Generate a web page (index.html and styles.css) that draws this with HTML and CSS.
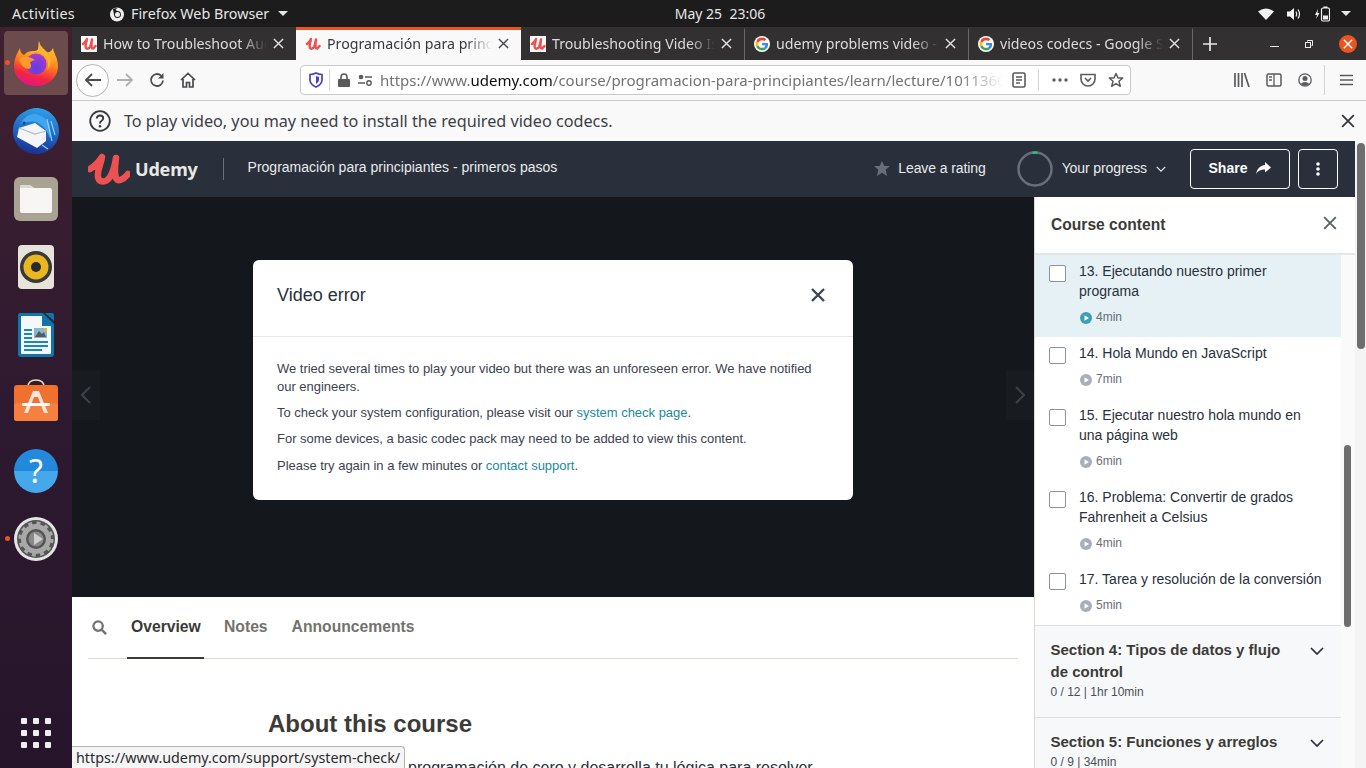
FILE: index.html
```html
<!DOCTYPE HTML>
<html>
    <head>
        <meta charset='utf-8'/>
        <title>Programación para principiantes</title>
        <link rel="stylesheet" href="styles.css">
    </head>
    <body>
        <svg class="defs" width="0" height="0">
            <symbol id="fav-u" viewBox="0 0 16 16">
                <path d="M2 8C4 6.500 5 5 6 3C5.500 6 4 9 4.800 11.500C5.500 13.500 8 13 9.200 10.500C10 8.500 10.500 6 11 3.500C10.500 7 10 10 11 12C11.800 13 13 12 14.500 10" fill="none" stroke="#ec5252" stroke-width="2.400" stroke-linecap="round" stroke-linejoin="round"/>
            </symbol>
            <symbol id="fav-g" viewBox="-6 -6 60 60">
                <circle cx="24" cy="24" r="30" fill="#fff"/>
                <path fill="#EA4335" d="M24 9.500c3.540 0 6.710 1.220 9.210 3.600l6.850-6.850C35.900 2.380 30.470 0 24 0 14.620 0 6.510 5.380 2.560 13.220l7.980 6.190C12.430 13.720 17.740 9.500 24 9.500z"/>
                <path fill="#4285F4" d="M46.980 24.550c0-1.570-.15-3.090-.38-4.550H24v9.020h12.940c-.58 2.960-2.260 5.480-4.780 7.180l7.730 6c4.510-4.180 7.090-10.360 7.090-17.650z"/>
                <path fill="#FBBC05" d="M10.530 28.590c-.48-1.450-.76-2.990-.76-4.590s.27-3.140.76-4.590l-7.980-6.190C.92 16.460 0 20.120 0 24c0 3.880.92 7.540 2.560 10.780l7.970-6.190z"/>
                <path fill="#34A853" d="M24 48c6.480 0 11.930-2.130 15.890-5.810l-7.730-6c-2.150 1.450-4.920 2.300-8.160 2.300-6.260 0-11.570-4.220-13.470-9.910l-7.980 6.190C6.510 42.620 14.620 48 24 48z"/>
            </symbol>
            <symbol id="x" viewBox="0 0 12 12">
                <path d="M1 1L11 11M11 1L1 11" fill="none" stroke="currentColor" stroke-width="1.600"/>
            </symbol>
            <symbol id="play" viewBox="0 0 12 12">
                <circle cx="6" cy="6" r="6" fill="currentColor"/>
                <path d="M4.500 3.200L9 6L4.500 8.800Z" fill="#fff"/>
            </symbol>
            <symbol id="chev" viewBox="0 0 14 8">
                <path d="M1 1L7 7L13 1" fill="none" stroke="currentColor" stroke-width="1.700"/>
            </symbol>
        </svg>

        <div id="panel">
            <div class="panel-left">
                <span class="activities">Activities</span>
                <span class="app-menu">
                    <svg width="16" height="16" viewBox="0 0 16 16"><circle cx="8" cy="8.500" r="7" fill="#eee"/><path d="M5 9a3.500 3.500 0 1 0 3-4L6.500 3.500L9 1.500L4 3Z" fill="#1d1d1d"/><circle cx="8.500" cy="8.500" r="2.500" fill="#eee"/></svg>
                    Firefox Web Browser
                    <i class="caret"></i>
                </span>
            </div>
            <div class="clock">May 25&nbsp; 23:06</div>
            <div class="panel-right">
                <svg width="16" height="12" viewBox="0 0 16 12"><path d="M0 3.500Q8 -2.500 16 3.500L8 12Z" fill="#f2f2f2"/></svg>
                <svg width="15" height="14" viewBox="0 0 15 14"><path d="M0 4.500H3L7 1V13L3 9.500H0Z" fill="#f2f2f2"/><path d="M9 4.500Q10.500 7 9 9.500M11 2.500Q14 7 11 11.500" fill="none" stroke="#f2f2f2" stroke-width="1.200"/></svg>
                <svg width="15" height="16" viewBox="0 0 15 16"><path d="M3 3L0 9H2L1 13L4.500 7H2.500Z" fill="#f2f2f2"/><rect x="6.500" y="2" width="8" height="13" rx="1.500" fill="none" stroke="#f2f2f2" stroke-width="1.200"/><rect x="8.500" y="0.500" width="4" height="1.500" fill="#f2f2f2"/><rect x="8" y="9.500" width="5" height="4" fill="#f2f2f2"/></svg>
                <i class="caret"></i>
            </div>
        </div>

        <div id="desktop">
            <div id="dock">
                <div class="dock-item active">
                    <i class="run-dot"></i>
                    <svg width="46" height="47" viewBox="0 0 46 47">
                        <defs>
                            <linearGradient id="ff-body" x1="0.700" y1="0" x2="0.400" y2="1"><stop offset="0" stop-color="#ffd22e"/><stop offset="0.450" stop-color="#ff8a1f"/><stop offset="0.780" stop-color="#f3263f"/><stop offset="1" stop-color="#e3148a"/></linearGradient>
                            <radialGradient id="ff-core" cx="0.500" cy="0.700" r="0.700"><stop offset="0" stop-color="#5f3de0"/><stop offset="1" stop-color="#a93bd0"/></radialGradient>
                        </defs>
                        <path d="M26 1C26 6 30 9 34 12C36 13 38 12 40 8C41 14 45 18 45 26C45 38 35 46 23 46C11 46 1 38 1 26C1 20 3 15 7 8C7 12 9 14 11 15C14 11 18 11 22 11C27 11 25 5 26 1Z" fill="url(#ff-body)"/>
                        <circle cx="23" cy="24" r="10.500" fill="url(#ff-core)"/>
                        <path d="M6 19C11 15 18 17 22 20C18 21 17 22 17 23C20 28 16 30 12 28C9 26 7 23 6 19Z" fill="#ff9a2a"/>
                        <path d="M14 16C18 11 27 11 31 15C35 19 36 24 34 30C38 26 39 20 36 15C32 9 27 7 26 1C25 5 27 11 22 11C19 11 16 13 14 16Z" fill="#ffb52b"/>
                    </svg>
                </div>
                <div class="dock-item">
                    <svg width="48" height="48" viewBox="0 0 48 48">
                        <defs><linearGradient id="tb-bird" x1="0.600" y1="0" x2="0.400" y2="1"><stop offset="0" stop-color="#2f9fe8"/><stop offset="0.600" stop-color="#1d5fc0"/><stop offset="1" stop-color="#1c2f8c"/></linearGradient></defs>
                        <path d="M24 1C37 1 47 11 47 24C47 37 37 47 24 47C11 47 1 37 1 24C1 14 6 8 12 5C17 2 20 1 24 1Z" fill="url(#tb-bird)"/>
                        <path d="M9 17C12 9 20 5 27 8C36 11 40 20 38 32C36 24 31 18 24 15C18 14 13 15 9 17Z" fill="#3fa6ee"/>
                        <path d="M39 14L43 28M35 12L40 34M30 38L36 42" stroke="#8fd0f5" stroke-width="1.200" fill="none"/>
                        <path d="M7 21L23 16L34 24V34L25 41L5 30Z" fill="#f4f5f8"/>
                        <path d="M7 21L23 27L34 24" fill="none" stroke="#b4bac8" stroke-width="1.200"/>
                        <circle cx="12" cy="16" r="1.500" fill="#173a7a"/>
                    </svg>
                </div>
                <div class="dock-item">
                    <svg width="46" height="46" viewBox="0 0 46 46">
                        <rect x="1" y="1" width="44" height="44" rx="6" fill="#a9a394"/>
                        <path d="M7 11Q7 9 9 9H17L21 12H37Q39 12 39 14V35Q39 37 37 37H9Q7 37 7 35Z" fill="#f7f6f4"/>
                        <path d="M7 11Q7 9 9 9H17L21 12H7Z" fill="#dcd9d2"/>
                    </svg>
                </div>
                <div class="dock-item">
                    <svg width="38" height="46" viewBox="0 0 38 46">
                        <rect x="1" y="1" width="36" height="44" rx="4" fill="#e6e3da"/>
                        <circle cx="19" cy="23" r="16" fill="#3a3a3a"/>
                        <circle cx="19" cy="23" r="12.500" fill="#e9b820"/>
                        <circle cx="19" cy="23" r="5" fill="#2a2a2a"/>
                    </svg>
                </div>
                <div class="dock-item">
                    <svg width="38" height="46" viewBox="0 0 38 46">
                        <path d="M3 1H26L37 12V42Q37 45 34 45H4Q1 45 1 42V3Q1 1 3 1Z" fill="#0f76a8"/>
                        <path d="M4 4H25V14H34V41Q34 42 33 42H5Q4 42 4 41Z" fill="#f5f8fa"/>
                        <path d="M28 1H35Q37 1 37 3V9Z" fill="#0f76a8"/>
                        <rect x="7" y="17" width="8" height="2" fill="#1a86bd"/><rect x="7" y="21" width="8" height="2" fill="#1a86bd"/><rect x="7" y="25" width="8" height="2" fill="#1a86bd"/>
                        <rect x="17" y="16" width="13" height="10" fill="#8db5cc"/><path d="M18 25L22 19L25 22L27 20L29 25Z" fill="#4e5d68"/><rect x="27" y="16" width="3" height="3" fill="#e9b820"/>
                        <rect x="7" y="29" width="24" height="2" fill="#1a86bd"/><rect x="7" y="33" width="24" height="2" fill="#1a86bd"/><rect x="7" y="37" width="18" height="2" fill="#1a86bd"/>
                    </svg>
                </div>
                <div class="dock-item">
                    <svg width="46" height="50" viewBox="0 0 46 50">
                        <path d="M15 9Q15 2 23 2Q31 2 31 9" fill="none" stroke="#eed9b8" stroke-width="1.600"/>
                        <rect x="1" y="7" width="44" height="36" rx="3" fill="#f0702e"/>
                        <rect x="1" y="25" width="44" height="18" rx="3" fill="#f58040"/>
                        <path d="M20 13H26L35 35H31L25 19H21L15 35H11Z" fill="#f8e6dc"/>
                        <rect x="9" y="25" width="28" height="3" rx="1.500" fill="#fff"/>
                    </svg>
                </div>
                <div class="dock-item">
                    <div class="help-ball">?</div>
                </div>
                <div class="dock-item">
                    <i class="run-dot"></i>
                    <svg width="46" height="46" viewBox="0 0 46 46">
                        <circle cx="23" cy="23" r="22" fill="#e4e4e4"/>
                        <circle cx="23" cy="23" r="19" fill="#555"/>
                        <circle cx="23" cy="23" r="12.500" fill="none" stroke="#a8a8a8" stroke-width="5"/>
                        <circle cx="23" cy="23" r="16" fill="none" stroke="#a8a8a8" stroke-width="3" stroke-dasharray="4 4.380"/>
                        <circle cx="23" cy="23" r="7.500" fill="#8a8a8a"/>
                        <path d="M21 17L30 23L21 29Z" fill="#cfcfcf"/>
                    </svg>
                </div>
                <div class="app-grid">
                    <i></i><i></i><i></i><i></i><i></i><i></i><i></i><i></i><i></i>
                </div>
            </div>

            <div id="browser">
                <div class="tabbar">
                    <div class="tab">
                        <span class="fav-box"><svg width="16" height="16"><use href="#fav-u"/></svg></span>
                        <span class="tab-title">How to Troubleshoot Audio and Video</span>
                        <svg class="tab-x" width="11" height="11"><use href="#x"/></svg>
                    </div>
                    <div class="tab current">
                        <svg class="fav" width="16" height="16"><use href="#fav-u"/></svg>
                        <span class="tab-title">Programación para principiantes</span>
                        <svg class="tab-x" width="11" height="11"><use href="#x"/></svg>
                    </div>
                    <div class="tab sep">
                        <span class="fav-box"><svg width="16" height="16"><use href="#fav-u"/></svg></span>
                        <span class="tab-title">Troubleshooting Video Issues</span>
                        <svg class="tab-x" width="11" height="11"><use href="#x"/></svg>
                    </div>
                    <div class="tab sep">
                        <svg class="fav" width="16" height="16"><use href="#fav-g"/></svg>
                        <span class="tab-title">udemy problems video - Google</span>
                        <svg class="tab-x" width="11" height="11"><use href="#x"/></svg>
                    </div>
                    <div class="tab sep">
                        <svg class="fav" width="16" height="16"><use href="#fav-g"/></svg>
                        <span class="tab-title">videos codecs - Google Search</span>
                        <svg class="tab-x" width="11" height="11"><use href="#x"/></svg>
                    </div>
                    <div class="new-tab">
                        <svg width="14" height="14" viewBox="0 0 14 14"><path d="M7 0V14M0 7H14" stroke="#e8e8e8" stroke-width="1.700"/></svg>
                    </div>
                    <div class="win-btns">
                        <i class="win-min"></i>
                        <svg class="win-max" width="8" height="8" viewBox="0 0 8 8"><path d="M2.500 1.500V0.500H7.500V5.500H6.500" fill="none" stroke="#eee"/><rect x="0.500" y="2.500" width="5" height="5" fill="none" stroke="#eee"/></svg>
                        <span class="win-close"><svg width="10" height="10"><use href="#x"/></svg></span>
                    </div>
                </div>

                <div class="toolbar">
                    <div class="back-btn">
                        <svg width="16" height="14" viewBox="0 0 16 14"><path d="M7 1L1 7L7 13M1 7H16" fill="none" stroke="#4a4a4f" stroke-width="1.800"/></svg>
                    </div>
                    <svg class="fwd" width="16" height="14" viewBox="0 0 16 14"><path d="M9 1L15 7L9 13M15 7H0" fill="none" stroke="#b1b1b3" stroke-width="1.800"/></svg>
                    <svg class="reload" width="16" height="16" viewBox="0 0 16 16"><path d="M14 8.500A6 6 0 1 1 12 3.500" fill="none" stroke="#4a4a4f" stroke-width="1.800"/><path d="M14.500 1V6.500H9Z" fill="#4a4a4f"/></svg>
                    <svg class="home" width="16" height="16" viewBox="0 0 16 16"><path d="M1 8L8 1.500L15 8M3 7V15H6.500V10.500H9.500V15H13V7" fill="none" stroke="#4a4a4f" stroke-width="1.700"/></svg>
                    <div class="urlbar">
                        <svg class="shield" width="14" height="16" viewBox="0 0 14 16"><path d="M7 1Q10 2.500 13 2.500V8Q13 12.500 7 15Q1 12.500 1 8V2.500Q4 2.500 7 1Z" fill="#fff" stroke="#4b3fc9" stroke-width="1.700"/><path d="M7 4Q8.500 4.800 10 4.800V8Q10 10.500 7 12Z" fill="#4b3fc9"/></svg>
                        <i class="url-sep"></i>
                        <svg class="lock" width="12" height="14" viewBox="0 0 12 14"><path d="M3 6V4a3 3 0 0 1 6 0V6" fill="none" stroke="#5b5b5f" stroke-width="1.600"/><rect y="6" width="12" height="8" rx="1" fill="#5b5b5f"/></svg>
                        <svg class="perm" width="14" height="12" viewBox="0 0 14 12"><circle cx="3" cy="3" r="2.300" fill="#5b5b5f"/><path d="M7 3H14M0 9H7" stroke="#5b5b5f" stroke-width="1.500"/><circle cx="11" cy="9" r="2.200" fill="none" stroke="#5b5b5f" stroke-width="1.400"/></svg>
                        <div class="url-text">https://www.<b>udemy.com</b>/course/programacion-para-principiantes/learn/lecture/10113606</div>
                        <svg class="reader" width="14" height="16" viewBox="0 0 14 16"><rect x="1" y="1" width="12" height="14" rx="1.500" fill="none" stroke="#5b5b5f" stroke-width="1.600"/><path d="M4 5H10M4 8H10M4 11H8" stroke="#5b5b5f" stroke-width="1.300"/></svg>
                        <i class="url-sep"></i>
                        <svg class="dots" width="16" height="4" viewBox="0 0 16 4"><circle cx="2" cy="2" r="1.700" fill="#5b5b5f"/><circle cx="8" cy="2" r="1.700" fill="#5b5b5f"/><circle cx="14" cy="2" r="1.700" fill="#5b5b5f"/></svg>
                        <svg class="pocket" width="16" height="14" viewBox="0 0 16 14"><path d="M1 1.500H15V6A7 7 0 0 1 1 6Z" fill="none" stroke="#5b5b5f" stroke-width="1.600"/><path d="M5 5L8 8L11 5" fill="none" stroke="#5b5b5f" stroke-width="1.600"/></svg>
                        <svg class="star" width="16" height="16" viewBox="0 0 16 16"><path d="M8 1.500L10 6H14.800L11 9.300L12.300 14.300L8 11.600L3.700 14.300L5 9.300L1.200 6H6Z" fill="none" stroke="#5b5b5f" stroke-width="1.500" stroke-linejoin="round"/></svg>
                    </div>
                    <div class="tools">
                        <svg width="16" height="14" viewBox="0 0 16 14"><path d="M1 0V14M4.500 0V14M8 0V14M10.500 0L15 14" fill="none" stroke="#5b5b5f" stroke-width="1.700"/></svg>
                        <svg width="16" height="14" viewBox="0 0 16 14"><rect x="1" y="1" width="14" height="12" rx="1.500" fill="none" stroke="#5b5b5f" stroke-width="1.500"/><path d="M8 1V13M3 4H6M3 7H6" stroke="#5b5b5f" stroke-width="1.300"/></svg>
                        <svg width="14" height="14" viewBox="0 0 14 14"><circle cx="7" cy="7" r="6.200" fill="none" stroke="#5b5b5f" stroke-width="1.300"/><circle cx="7" cy="5.500" r="2.500" fill="#5b5b5f"/><path d="M2.500 11Q7 7 11.500 11Q7 14.500 2.500 11Z" fill="#5b5b5f"/></svg>
                        <i class="tool-sep"></i>
                        <svg width="13" height="12" viewBox="0 0 13 12"><path d="M0 1.500H13M0 6H13M0 10.500H13" stroke="#5b5b5f" stroke-width="1.700"/></svg>
                    </div>
                </div>

                <div class="infobar">
                    <div class="info-left">
                        <svg width="22" height="22" viewBox="0 0 22 22"><circle cx="11" cy="11" r="9.800" fill="none" stroke="#38383d" stroke-width="1.800"/><path d="M7.800 8.500Q8 5.500 11 5.500Q14.200 5.500 14.200 8.200Q14.200 10 12.300 11Q11 11.700 11 13.500" fill="none" stroke="#38383d" stroke-width="1.900"/><circle cx="11" cy="16.300" r="1.300" fill="#38383d"/></svg>
                        <span>To play video, you may need to install the required video codecs.</span>
                    </div>
                    <svg class="info-x" width="14" height="14"><use href="#x"/></svg>
                </div>

                <div class="page">
                    <div class="course">
                        <div class="course-head">
                            <div class="head-left">
                                <svg class="logo" width="42" height="34" viewBox="0 0 42 34">
                                    <path d="M2 17C7 14 11 10 14 5C13 12 9 19 10 25C11 31 18 31 22 25C25 20 27 13 28 6C27 14 26 21 28 26C30 30 35 28 40 22" fill="none" stroke="#ec5252" stroke-width="6.500" stroke-linecap="round" stroke-linejoin="round"/>
                                </svg>
                                <span class="logo-word">Udemy</span>
                                <i class="head-sep"></i>
                                <span class="course-name">Programación para principiantes - primeros pasos</span>
                            </div>
                            <div class="head-right">
                                <span class="rating">
                                    <svg width="16" height="15" viewBox="0 0 16 15"><path d="M8 0L10.400 5H16L11.700 8.800L13 15L8 11.800L3 15L4.300 8.800L0 5H5.600Z" fill="#686f7a"/></svg>
                                    Leave a rating
                                </span>
                                <span class="progress">
                                    <svg width="36" height="36" viewBox="0 0 36 36"><circle cx="18" cy="18" r="16.500" fill="none" stroke="#686f7a" stroke-width="2.500"/><path d="M15.500 1.700A16.500 16.500 0 0 1 20.500 1.700" fill="none" stroke="#2ebd85" stroke-width="2.500"/></svg>
                                    <span>Your progress</span>
                                    <svg class="prog-chev" width="10" height="6"><use href="#chev"/></svg>
                                </span>
                                <span class="share-btn">Share
                                    <svg width="15" height="12" viewBox="0 0 15 12"><path d="M9 0L15 5.500L9 10.500V7.500C5 7.500 2.500 8.500 0 12C1 7 4 3.500 9 3Z" fill="#fff"/></svg>
                                </span>
                                <span class="more-btn">
                                    <svg width="4" height="14" viewBox="0 0 4 14"><circle cx="2" cy="2" r="1.800" fill="#fff"/><circle cx="2" cy="7" r="1.800" fill="#fff"/><circle cx="2" cy="12" r="1.800" fill="#fff"/></svg>
                                </span>
                            </div>
                        </div>
                        <div class="course-body">
                            <div class="main-col">
                                <div class="video">
                                    <div class="nav-arrow left"><svg width="10" height="18" viewBox="0 0 10 18"><path d="M9 1L1 9L9 17" fill="none" stroke="#3d4147" stroke-width="2"/></svg></div>
                                    <div class="modal">
                                        <div class="modal-head">
                                            <span>Video error</span>
                                            <svg width="14" height="14" viewBox="0 0 14 14"><path d="M1 1L13 13M13 1L1 13" stroke="#3e4652" stroke-width="2.400"/></svg>
                                        </div>
                                        <div class="modal-body">
                                            <p>We tried several times to play your video but there was an unforeseen error. We have notified our engineers.</p>
                                            <p>To check your system configuration, please visit our <a>system check page</a>.</p>
                                            <p>For some devices, a basic codec pack may need to be added to view this content.</p>
                                            <p>Please try again in a few minutes or <a>contact support</a>.</p>
                                        </div>
                                    </div>
                                    <div class="nav-arrow right"><svg width="10" height="18" viewBox="0 0 10 18"><path d="M1 1L9 9L1 17" fill="none" stroke="#3d4147" stroke-width="2"/></svg></div>
                                </div>
                                <div class="lesson-tabs">
                                    <svg class="search" width="15" height="15" viewBox="0 0 16 16"><circle cx="6.500" cy="6.500" r="5" fill="none" stroke="#73726c" stroke-width="2.400"/><path d="M10 10L15 15" stroke="#73726c" stroke-width="2.600"/></svg>
                                    <span class="ltab on">Overview</span>
                                    <span class="ltab">Notes</span>
                                    <span class="ltab">Announcements</span>
                                </div>
                                <div class="about">
                                    <h2>About this course</h2>
                                    <p>programación de cero y desarrolla tu lógica para resolver</p>
                                </div>
                            </div>
                            <div class="sidebar">
                                <div class="side-head">
                                    <span>Course content</span>
                                    <svg width="14" height="14"><use href="#x"/></svg>
                                </div>
                                <div class="side-scroll">
                                    <div class="side-list">
                                        <div class="lecture now">
                                            <i class="check"></i>
                                            <div><div class="lec-title">13. Ejecutando nuestro primer programa</div>
                                            <div class="lec-time"><svg width="12" height="12"><use href="#play"/></svg>4min</div></div>
                                        </div>
                                        <div class="lecture">
                                            <i class="check"></i>
                                            <div><div class="lec-title">14. Hola Mundo en JavaScript</div>
                                            <div class="lec-time"><svg width="12" height="12"><use href="#play"/></svg>7min</div></div>
                                        </div>
                                        <div class="lecture">
                                            <i class="check"></i>
                                            <div><div class="lec-title">15. Ejecutar nuestro hola mundo en una página web</div>
                                            <div class="lec-time"><svg width="12" height="12"><use href="#play"/></svg>6min</div></div>
                                        </div>
                                        <div class="lecture">
                                            <i class="check"></i>
                                            <div><div class="lec-title">16. Problema: Convertir de grados Fahrenheit a Celsius</div>
                                            <div class="lec-time"><svg width="12" height="12"><use href="#play"/></svg>4min</div></div>
                                        </div>
                                        <div class="lecture">
                                            <i class="check"></i>
                                            <div><div class="lec-title">17. Tarea y resolución de la conversión</div>
                                            <div class="lec-time"><svg width="12" height="12"><use href="#play"/></svg>5min</div></div>
                                        </div>
                                        <div class="section">
                                            <div><div class="sec-title">Section 4: Tipos de datos y flujo de control</div>
                                            <div class="sec-meta">0 / 12 | 1hr 10min</div></div>
                                            <svg width="14" height="8"><use href="#chev"/></svg>
                                        </div>
                                        <div class="section">
                                            <div><div class="sec-title">Section 5: Funciones y arreglos</div>
                                            <div class="sec-meta">0 / 9 | 34min</div></div>
                                            <svg width="14" height="8"><use href="#chev"/></svg>
                                        </div>
                                    </div>
                                    <div class="side-track"><i></i></div>
                                </div>
                            </div>
                        </div>
                    </div>
                    <div class="page-track"><i></i></div>
                    <div class="status-tip">https://www.udemy.com/support/system-check/</div>
                </div>
            </div>
        </div>
    </body>
</html>
```

FILE: styles.css
```css
*{
    box-sizing: border-box;
}
html,body{
    margin: 0;
    width: 1366px;
    height: 768px;
    overflow: hidden;
}
body{
    font-family: "Liberation Sans", sans-serif;
    background: #1d1d1d;
}
i{
    display: block;
    font-style: normal;
}
svg{
    display: block;
    flex: none;
}
.defs{
    position: absolute;
}

/* top panel */
#panel{
    height: 27px;
    background: #1c1c1c;
    color: #e6e6e6;
    font-family: "Noto Sans", sans-serif;
    font-size: 14.300px;
    display: grid;
    grid-template-columns: 1fr auto 1fr;
    align-items: center;
}
.panel-left{
    display: flex;
    align-items: center;
    padding-left: 12px;
}
.activities{
    width: 97px;
    letter-spacing: 0.350px;
}
.app-menu{
    display: flex;
    align-items: center;
    gap: 6px;
}
.caret{
    width: 0;
    height: 0;
    border-left: 5px solid transparent;
    border-right: 5px solid transparent;
    border-top: 5px solid #e6e6e6;
}
.app-menu .caret{
    margin-left: 3px;
}
.clock{
    margin-left: 74px;
    font-size: 14px;
}
.panel-right{
    display: flex;
    align-items: center;
    justify-content: flex-end;
    gap: 13px;
    padding-right: 15px;
}
.panel-right .caret{
    margin-left: -2px;
}

/* dock */
#desktop{
    display: flex;
    height: 741px;
}
#dock{
    width: 72px;
    flex: none;
    padding: 4px;
    display: flex;
    flex-direction: column;
    gap: 4px;
    background: linear-gradient(#41202f, #2e1a30 50%, #26152a);
}
.dock-item{
    position: relative;
    height: 64px;
    display: flex;
    align-items: center;
    justify-content: center;
    border-radius: 4px;
}
.dock-item.active{
    background: #6b4b4c;
}
.run-dot{
    position: absolute;
    left: 1px;
    top: 29px;
    width: 5px;
    height: 5px;
    border-radius: 50%;
    background: #e95420;
}
.help-ball{
    width: 44px;
    height: 44px;
    border-radius: 50%;
    background: linear-gradient(#2389dc 50%, #45a8ea 50%);
    color: #fff;
    font-family: "Noto Sans", sans-serif;
    font-size: 32px;
    line-height: 44px;
    text-align: center;
}
.app-grid{
    margin-top: auto;
    margin-bottom: 16px;
    align-self: center;
    display: grid;
    grid-template-columns: repeat(3, 6px);
    gap: 6px;
}
.app-grid i{
    width: 6px;
    height: 6px;
    border-radius: 1px;
    background: #eee;
}

/* browser window */
#browser{
    flex: 1;
    min-width: 0;
    display: flex;
    flex-direction: column;
}
.tabbar{
    height: 33px;
    background: #323031;
    display: flex;
    align-items: stretch;
    font-family: "Noto Sans", sans-serif;
    font-size: 14.200px;
    color: #dcdcdc;
}
.tab{
    width: 224px;
    flex: none;
    display: flex;
    align-items: center;
    padding: 0 12px 3px 9px;
    border-top: 3px solid transparent;
}
.tab.sep{
    border-right: 1px solid #68676a;
}
.tab.current{
    width: 225px;
    background: #f9f9fa;
    color: #38383d;
    border-top-color: #e95420;
}
.fav-box{
    width: 16px;
    height: 16px;
    background: #f7f7f7;
    flex: none;
}
.fav{
    flex: none;
}
.tab-title{
    flex: 1;
    min-width: 0;
    margin: 0 6px;
    white-space: nowrap;
    overflow: hidden;
    -webkit-mask-image: linear-gradient(to right, #000 84%, transparent);
}
.tab-x{
    color: #e0e0e0;
}
.current .tab-x{
    color: #4a4a4f;
}
.new-tab{
    width: 34px;
    display: flex;
    align-items: center;
    justify-content: center;
}
.win-btns{
    flex: 1;
    display: flex;
    align-items: center;
    justify-content: flex-end;
    padding-right: 9px;
}
.win-min{
    width: 9px;
    height: 1px;
    background: #eee;
    margin: 5px 26px 0 0;
}
.win-max{
    margin-right: 26px;
}
.win-close{
    width: 18px;
    height: 18px;
    border-radius: 50%;
    background: #e95420;
    color: #fff;
    display: flex;
    align-items: center;
    justify-content: center;
}

.toolbar{
    height: 41px;
    background: #f9f9fa;
    border-bottom: 1px solid #cbcbcb;
    display: flex;
    align-items: center;
    padding-left: 4px;
}
.back-btn{
    width: 33px;
    height: 33px;
    border-radius: 50%;
    border: 1px solid #b5b5b5;
    background: #fdfdfd;
    display: flex;
    align-items: center;
    justify-content: center;
}
.fwd{
    margin-left: 8px;
}
.reload{
    margin-left: 16px;
}
.home{
    margin-left: 15px;
}
.urlbar{
    width: 831px;
    height: 30px;
    margin-left: 104px;
    background: #fff;
    border: 1px solid #c8c8c8;
    border-radius: 4px;
    display: flex;
    align-items: center;
    padding-left: 8px;
    flex: none;
}
.url-sep{
    width: 1px;
    height: 22px;
    background: #d4d4d4;
}
.shield{
    margin-right: 6px;
}
.lock{
    margin-left: 8px;
}
.perm{
    margin-left: 8px;
}
.url-text{
    width: 623px;
    margin-left: 8px;
    font-family: "Noto Sans", sans-serif;
    font-size: 15px;
    color: #737373;
    white-space: nowrap;
    overflow: hidden;
    -webkit-mask-image: linear-gradient(to right, #000 93%, transparent);
}
.url-text b{
    font-weight: 400;
    color: #0c0c0d;
}
.reader{
    margin: 0 12px 0 9px;
}
.dots{
    margin-left: 13px;
}
.pocket{
    margin-left: 12px;
}
.star{
    margin-left: 12px;
}
.tools{
    flex: 1;
    display: flex;
    align-items: center;
    padding-left: 103px;
    gap: 16px;
}
.tool-sep{
    width: 1px;
    height: 30px;
    background: #d4d4d4;
    margin: 0 0 0 -4px;
}
.tools svg:last-child{
    margin-left: -1px;
}

.infobar{
    height: 40px;
    background: #f9f9fa;
    display: flex;
    align-items: center;
    justify-content: space-between;
    padding: 0 11px 0 17px;
    font-family: "Noto Sans", sans-serif;
    font-size: 16.200px;
    color: #3b4046;
}
.info-left{
    display: flex;
    align-items: center;
    gap: 13px;
}
.info-x{
    color: #38383d;
}

/* udemy page */
.page{
    position: relative;
    flex: 1;
    min-height: 0;
    display: flex;
    background: #fff;
}
.course{
    width: 1283px;
    flex: none;
    display: flex;
    flex-direction: column;
}
.page-track{
    flex: 1;
    background: #f4f4f4;
    padding: 2px 1px 0 2px;
}
.page-track i{
    height: 206px;
    border-radius: 4px;
    background: #6e6e6e;
}
.course-head{
    height: 56px;
    flex: none;
    background: #29303b;
    color: #e8eaec;
    font-size: 14px;
    display: flex;
    align-items: center;
    justify-content: space-between;
    padding: 0 17px 0 16px;
}
.head-left,.head-right{
    display: flex;
    align-items: center;
}
.logo-word{
    margin-left: 5px;
    font-family: "Noto Sans", sans-serif;
    font-size: 18px;
    font-weight: 700;
    color: #e8e8e6;
    letter-spacing: -0.200px;
}
.head-sep{
    width: 1px;
    height: 22px;
    margin: 0 24px 0 25px;
    background: #686f7a;
}
.course-name{
    margin-top: -5px;
}
.rating{
    display: flex;
    align-items: center;
    gap: 8px;
    letter-spacing: -0.100px;
    margin-top: -2px;
}
.progress{
    display: flex;
    align-items: center;
    margin-left: 31px;
    gap: 9px;
    letter-spacing: -0.100px;
}
.progress span{
    margin-top: -2px;
}
.prog-chev{
    margin-left: 0;
}
.share-btn{
    width: 100px;
    height: 40px;
    margin-left: 24px;
    padding-bottom: 2px;
    border: 1px solid #fff;
    border-radius: 4px;
    display: flex;
    align-items: center;
    justify-content: center;
    gap: 9px;
    font-weight: 700;
    color: #fff;
}
.more-btn{
    width: 40px;
    height: 40px;
    margin-left: 8px;
    border: 1px solid #fff;
    border-radius: 4px;
    display: flex;
    align-items: center;
    justify-content: center;
}
.course-body{
    flex: 1;
    min-height: 0;
    display: flex;
}
.main-col{
    width: 962px;
    flex: none;
}
.video{
    height: 400px;
    background: #14171c;
    display: flex;
    justify-content: space-between;
    align-items: flex-start;
}
.nav-arrow{
    width: 28px;
    height: 50px;
    margin-top: 173px;
    background: #181b20;
    display: flex;
    align-items: center;
    justify-content: center;
}
.modal{
    width: 600px;
    height: 240px;
    margin-top: 63px;
    background: #fff;
    border-radius: 6px;
    color: #3c4250;
}
.modal-head{
    height: 77px;
    padding: 0 28px 6px 24px;
    border-bottom: 1px solid #e8e9eb;
    display: flex;
    align-items: center;
    justify-content: space-between;
    font-size: 18px;
    color: #29303b;
}
.modal-body{
    padding: 23px 24px;
    font-size: 13px;
    line-height: 18px;
    letter-spacing: -0.020px;
}
.modal-body p{
    margin: 0 0 8.200px;
}
.modal-body a{
    color: #1a8a9f;
}
.lesson-tabs{
    height: 62px;
    margin: 0 16px;
    width: 930px;
    border-bottom: 1px solid #dcdacb;
    display: flex;
    align-items: center;
    font-size: 15.700px;
    font-weight: 700;
    color: #73726c;
}
.search{
    margin: 0 20px 0 4px;
}
.ltab{
    height: 62px;
    line-height: 60px;
    padding: 0 4px;
    margin-right: 16px;
}
.ltab.on{
    width: 77px;
    color: #3c3b37;
    border-bottom: 2px solid #3c3b37;
}
.about{
    padding: 50px 0 0 196px;
    color: #3c3b37;
}
.about h2{
    margin: 0;
    font-size: 24px;
    line-height: 30px;
}
.about p{
    margin: 17px 0 0;
    padding-left: 140px;
    font-size: 16px;
    line-height: 24px;
    color: #29303b;
}

/* course content sidebar */
.sidebar{
    width: 321px;
    flex: none;
    border-left: 1px solid #dcdacb;
    display: flex;
    flex-direction: column;
    min-height: 0;
}
.side-head{
    height: 58px;
    flex: none;
    padding: 0 18px 4px 16px;
    border-bottom: 2px solid #e4e6e8;
    display: flex;
    align-items: center;
    justify-content: space-between;
    font-size: 15.600px;
    font-weight: 700;
    color: #3c3b37;
}
.side-head span{
    padding-top: 3px;
}
.side-head svg{
    color: #5a6069;
}
.side-scroll{
    flex: 1;
    min-height: 0;
    display: flex;
    overflow: hidden;
}
.side-list{
    width: 306px;
    flex: none;
}
.side-track{
    flex: 1;
    background: #fafafa;
    padding: 190px 4px 0 3px;
}
.side-track i{
    height: 182px;
    border-radius: 4px;
    background: #6e6e6e;
}
.lecture{
    display: flex;
    padding: 6px 16px 0 14px;
    height: 82px;
    font-size: 14px;
    color: #29303b;
}
.lecture:nth-child(2),.lecture:nth-child(5){
    height: 62px;
}
.lecture.now{
    background: #e6f1f5;
}
.check{
    width: 17px;
    height: 17px;
    margin: 4px 13px 0 0;
    flex: none;
    background: #fff;
    border: 1px solid #8a92a3;
    border-radius: 2px;
}
.lec-title{
    line-height: 20px;
}
.lec-time{
    display: flex;
    align-items: center;
    gap: 4px;
    margin-top: 10px;
    padding-left: 1px;
    height: 12px;
    font-size: 12px;
    color: #686f7a;
}
.lec-time svg{
    color: #a9aebb;
    margin-top: 2px;
}
.now .lec-time svg{
    color: #3b9fb5;
}
.section{
    display: flex;
    justify-content: space-between;
    background: #f7f8fa;
    border-top: 1px solid #dcdfe3;
    padding: 13px 17px 0 15.500px;
    height: 92px;
    color: #3c3b37;
}
.section > svg{
    margin-top: 8px;
    color: #29303b;
}
.sec-title{
    width: 240px;
    font-size: 15px;
    font-weight: 700;
    line-height: 22px;
}
.sec-meta{
    font-size: 12px;
    line-height: 16px;
    margin-top: 1px;
    color: #4a4f57;
}

.status-tip{
    position: absolute;
    left: 0;
    bottom: 0;
    height: 22px;
    padding: 0 4px;
    background: #f5f5f5;
    border: 1px solid #b4b4b4;
    border-left: 0;
    border-bottom: 0;
    border-top-right-radius: 4px;
    font-family: "Noto Sans", sans-serif;
    font-size: 14.300px;
    line-height: 21px;
    color: #2a2a2e;
}
```
